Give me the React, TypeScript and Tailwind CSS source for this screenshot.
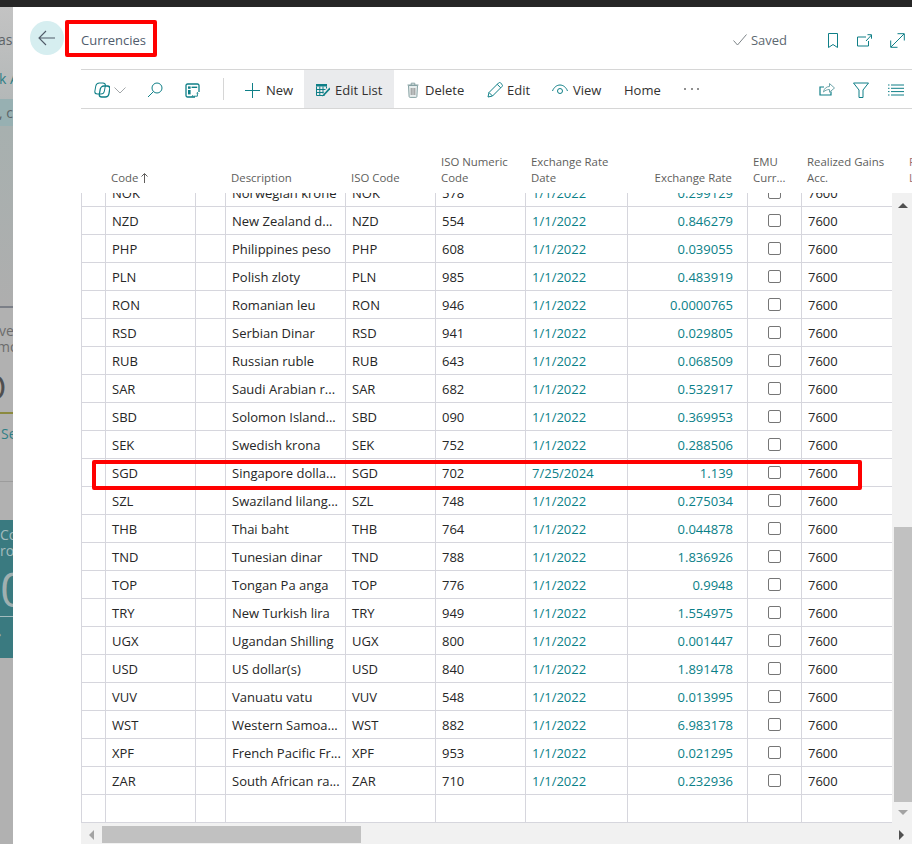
import type { ReactNode } from 'react';

const rows = [
  ['NOK', 'Norwegian krone', '578', '1/1/2022', '0.299129'],
  ['NZD', 'New Zealand d...', '554', '1/1/2022', '0.846279'],
  ['PHP', 'Philippines peso', '608', '1/1/2022', '0.039055'],
  ['PLN', 'Polish zloty', '985', '1/1/2022', '0.483919'],
  ['RON', 'Romanian leu', '946', '1/1/2022', '0.0000765'],
  ['RSD', 'Serbian Dinar', '941', '1/1/2022', '0.029805'],
  ['RUB', 'Russian ruble', '643', '1/1/2022', '0.068509'],
  ['SAR', 'Saudi Arabian r...', '682', '1/1/2022', '0.532917'],
  ['SBD', 'Solomon Island...', '090', '1/1/2022', '0.369953'],
  ['SEK', 'Swedish krona', '752', '1/1/2022', '0.288506'],
  ['SGD', 'Singapore dolla...', '702', '7/25/2024', '1.139'],
  ['SZL', 'Swaziland lilang...', '748', '1/1/2022', '0.275034'],
  ['THB', 'Thai baht', '764', '1/1/2022', '0.044878'],
  ['TND', 'Tunesian dinar', '788', '1/1/2022', '1.836926'],
  ['TOP', 'Tongan Pa anga', '776', '1/1/2022', '0.9948'],
  ['TRY', 'New Turkish lira', '949', '1/1/2022', '1.554975'],
  ['UGX', 'Ugandan Shilling', '800', '1/1/2022', '0.001447'],
  ['USD', 'US dollar(s)', '840', '1/1/2022', '1.891478'],
  ['VUV', 'Vanuatu vatu', '548', '1/1/2022', '0.013995'],
  ['WST', 'Western Samoa...', '882', '1/1/2022', '6.983178'],
  ['XPF', 'French Pacific Fr...', '953', '1/1/2022', '0.021295'],
  ['ZAR', 'South African ra...', '710', '1/1/2022', '0.232936'],
];

function Icon({ w = 16, h = 16, box = '0 0 16 16', children }: { w?: number; h?: number; box?: string; children: ReactNode }) {
  return (
    <svg width={w} height={h} viewBox={box} fill="none" stroke="#0f7f87" strokeWidth="1" className="shrink-0">
      {children}
    </svg>
  );
}

function Cell({ className = '', children }: { className?: string; children?: ReactNode }) {
  return <div className={`h-full border-r border-[#d6d6dd] flex items-center whitespace-nowrap overflow-hidden ${className}`}>{children}</div>;
}

function HeaderCell({ className = '', children }: { className?: string; children?: ReactNode }) {
  return <div className={`whitespace-nowrap leading-[16px] ${className}`}>{children}</div>;
}

function Row({ data }: { data?: string[] }) {
  return (
    <div className="h-[28px] border-l border-b border-[#d6d6dd] grid grid-cols-[24px_90px_30px_120px_90px_90px_102px_120px_54px_90px] items-stretch text-[13px] text-[#262626]">
      <Cell />
      <Cell className="pl-[6px] pt-[2px]">{data?.[0]}</Cell>
      <Cell />
      <Cell className="pl-[6px] pt-[2px]">{data?.[1]}</Cell>
      <Cell className="pl-[6px] pt-[2px]">{data?.[0]}</Cell>
      <Cell className="pl-[6px] pt-[2px]">{data?.[2]}</Cell>
      <Cell className="pl-[6px] pt-[2px] text-[#0a7f88]">{data?.[3]}</Cell>
      <Cell className="justify-end pr-[14px] pt-[2px] text-[#0a7f88]">{data?.[4]}</Cell>
      <Cell className="justify-center">{data && <span className="block w-[13px] h-[13px] border border-[#767676] rounded-[2px] bg-white" />}</Cell>
      <div className="h-full flex items-center pl-[6px] pt-[2px]">{data && '7600'}</div>
    </div>
  );
}

function BackdropStrip() {
  return (
    <div className="w-[13px] shrink-0 overflow-hidden flex flex-col bg-[#b1b1b1] text-[#5d6468] whitespace-nowrap text-[14px]">
      <div className="h-[92px] bg-gradient-to-b from-[#c3c3c3] to-[#b4b8b8] pt-[23px]">
        <div className="-ml-[2px] leading-[20px]">asl</div>
        <div className="mt-[19px] -ml-[1px] leading-[20px] text-[#2f7f86]">k A</div>
      </div>
      <div className="h-[27px] bg-[#97b0b2] flex items-center">
        <span className="-ml-[1px]">, c</span>
      </div>
      <div className="h-[180px] bg-gradient-to-b from-[#a7b0af] to-[#aeaeae]" />
      <div className="h-[2px] bg-[#7b7f87]" />
      <div className="h-[104px] pt-[15px] leading-[16px] text-[#6c6c6c]">
        <div className="-ml-[1px]">ver</div>
        <div className="-ml-[3px]">mo</div>
        <div className="mt-[17px] -ml-[20px] text-[34px] leading-[30px] text-[#4f4f4f]">O</div>
      </div>
      <div className="h-[2px] bg-[#8b8a3f]" />
      <div className="h-[67px] pt-[9px]">
        <span className="ml-[1px] text-[#2f7f86] leading-[16px]">Se</span>
      </div>
      <div className="h-px bg-[#9c9c9c]" />
      <div className="h-[38px]" />
      <div className="h-[138px] bg-[#3a7a80] text-[#a4bcbe] leading-[16px] pt-[7px]">
        <div>Co</div>
        <div>ro</div>
        <div className="mt-[7px] text-[48px] leading-[46px] text-[#a0b0b0]">0</div>
        <div className="h-px bg-[#a4bcbe] mt-[4px]" />
        <div className="-ml-[3px] mt-[9px]">›</div>
      </div>
    </div>
  );
}

function CommandBar() {
  return (
    <div className="h-[40px] border-y border-[#d6d6d6] flex items-center text-[13px] text-[#323130] pl-[13px] pr-[8px] pt-[2px]">
      <Icon>
        <rect x="2.500" y="1" width="9.500" height="11" rx="3" transform="skewX(-10)" />
        <rect x="7.500" y="4" width="9.500" height="11" rx="3" transform="skewX(-10)" strokeWidth="1.300" />
      </Icon>
      <span className="ml-[4px]">
        <Icon w={12} h={12} box="0 0 12 12">
          <path d="M0.5 3.5 6 9l5.5-5.5" stroke="#a2a6a9" />
        </Icon>
      </span>
      <span className="ml-[21px]">
        <Icon>
          <circle cx="10" cy="6" r="5" />
          <path d="M6.5 9.5 1 15" />
        </Icon>
      </span>
      <span className="ml-[22px]">
        <Icon w={15} h={15} box="0 0 15 15">
          <path d="M10 14H2.5A1.5 1.5 0 0 1 1 12.5v-10A1.5 1.5 0 0 1 2.5 1h10A1.5 1.5 0 0 1 14 2.5V9" strokeWidth="1.3" />
          <rect x="3" y="3.4" width="2.6" height="2.4" fill="#0f7f87" stroke="none" />
          <rect x="6.6" y="3.6" width="5.6" height="1.4" fill="#0f7f87" stroke="none" />
          <rect x="3" y="7" width="2.6" height="4.4" fill="#0f7f87" stroke="none" />
          <path d="M12.4 9.6v3.6h-4M7.8 12.3l-.9.9.9.9M11.6 10.3l.8-.8.8.8" strokeWidth="0.9" />
        </Icon>
      </span>
      <div className="ml-[23px] w-px h-[22px] bg-[#d6d6d6] -mt-[2px]" />
      <span className="ml-[21px]">
        <Icon w={15} h={15} box="0 0 15 15">
          <path d="M7.5 0v15M0 7.5h15" />
        </Icon>
      </span>
      <span className="ml-[6px] w-[38px] pt-px">New</span>
      <div className="w-[90px] h-[38px] -mt-[2px] pt-[2px] bg-[#eaebed] flex items-center pl-[12px] gap-[5px]">
        <svg width="14" height="14" viewBox="0 0 14 14" className="shrink-0">
          <path d="M0 1h11v2.5H0z" fill="#0f7f87" />
          <path d="M.5 3.5v9h8M.5 6.5h9M.5 9.5h7M3.8 3.5v9M7 3.5v7M10.5 3.5v2" stroke="#0f7f87" fill="none" />
          <path d="M13.5 4.5 7.5 11l-1.5 2.5 2.6-1.3 6-6.200z" fill="#0f7f87" />
        </svg>
        <span className="pt-px">Edit List</span>
      </div>
      <span className="ml-[13px]">
        <Icon w={12} h={16} box="0 0 12 16">
          <path d="M1.500 3.500h9l-.6 11a1 1 0 0 1-1 .9H3.100a1 1 0 0 1-1-.9z" stroke="#86a1a3" fill="#e8eeee" />
          <path d="M.5 3h11M4.200 3V1.200h3.600V3" stroke="#86a1a3" />
          <path d="M4.200 6v7M6 6v7M7.800 6v7" stroke="#8a8a8a" />
        </Icon>
      </span>
      <span className="ml-[6px] w-[62px] pt-px">Delete</span>
      <Icon>
        <path d="M1 15l1-4.500L11.500 1a1.500 1.500 0 0 1 2.100 0l1.400 1.400a1.500 1.500 0 0 1 0 2.100L5.500 14z" />
        <path d="M2 10.500 5.500 14M10.200 2.300l3.500 3.500" />
      </Icon>
      <span className="ml-[4px] w-[45px] pt-px">Edit</span>
      <Icon h={12} box="0 0 16 12">
        <path d="M.5 7C2 3 5 1 8 1s6 2 7.500 6" />
        <circle cx="8" cy="7" r="2.500" />
      </Icon>
      <span className="ml-[5px] w-[51px] pt-px">View</span>
      <span className="w-[60px] pt-px">Home</span>
      <span className="w-[15px] flex justify-between -mt-[2px]">
        <i className="block w-[2px] h-[2px] bg-[#6b6b6b] rounded-full" />
        <i className="block w-[2px] h-[2px] bg-[#6b6b6b] rounded-full" />
        <i className="block w-[2px] h-[2px] bg-[#6b6b6b] rounded-full" />
      </span>
      <div className="flex-1" />
      <Icon box="0 1.500 16 16">
        <path d="M5 6.500H1v8h11V11" strokeWidth="1.200" />
        <path d="M4.500 11.500C5 8 7.500 6 10.500 6V3l5 4.500-5 4.200V9C8 9 6 10 4.500 11.500z" stroke="#6ea5aa" />
      </Icon>
      <span className="ml-[18px]">
        <Icon>
          <path d="M.5 1h15L10 8v7.500H6V8z" />
        </Icon>
      </span>
      <span className="ml-[19px]">
        <Icon h={12} box="0 0 16 12">
          <path d="M3 1h13M3 4.300h13M3 7.600h13M3 11h13M0 1h1.500M0 4.300h1.500M0 7.600h1.500M0 11h1.500" />
        </Icon>
      </span>
    </div>
  );
}

export default function App() {
  return (
    <div className="relative w-[912px] h-[844px] overflow-hidden flex flex-col bg-white font-['Open_Sans',sans-serif]">
      <div className="h-[7px] bg-[#262626] shrink-0" />
      <div className="flex-1 flex min-h-0">
        <BackdropStrip />
        <div className="flex-1 min-w-0 flex flex-col">
          <div className="h-[62px] shrink-0 flex items-center pl-[17px] pr-[7px] pt-[4px]">
            <div className="w-[34px] h-[34px] -mt-[4px] rounded-full bg-[#d6eef0] flex items-center justify-center">
              <svg width="18" height="16" viewBox="0 0 18 16" fill="none" stroke="#4f5b68" strokeWidth="1.100">
                <path d="M17 8H1M8 1 1 8l7 7" />
              </svg>
            </div>
            <span className="ml-[17px] pt-px text-[13px] text-[#505c6d]">Currencies</span>
            <div className="flex-1" />
            <svg width="14" height="12" viewBox="0 0 14 12" fill="none" stroke="#7d8488">
              <path d="M.5 6.500 4.500 11 13.500 .5" />
            </svg>
            <span className="ml-[4px] pt-px text-[13px] text-[#5d6871]">Saved</span>
            <span className="ml-[41px]">
              <Icon w={10} h={15} box="0 0 10 15">
                <path d="M.5 .5h9v14L5 11.500 .5 14.500z" />
              </Icon>
            </span>
            <span className="ml-[19px]">
              <Icon w={15} h={13} box="0 0 15 13">
                <path d="M9 3H.5v9h11V7" />
                <path d="M9 7 14.500 1M10.500 .7h4v4" />
              </Icon>
            </span>
            <span className="ml-[18px]">
              <Icon w={15} h={15} box="0 0 15 15">
                <path d="M1 14 14 1M7.500 .7h6.800v6.800M.7 7.500v6.800h6.800" />
              </Icon>
            </span>
          </div>
          <div className="ml-[68px] flex-1 min-h-0 flex flex-col">
            <CommandBar />
            <div className="h-[84px] shrink-0 overflow-hidden pb-[7px] flex items-end pl-px">
              <div className="w-[842px] shrink-0 grid grid-cols-[24px_90px_30px_120px_90px_90px_102px_120px_54px_102px_20px] items-end text-[11.400px] text-[#605e5c]">
                <div />
                <HeaderCell className="pl-[5px] flex items-center gap-[3px]">
                  Code
                  <svg width="7" height="10" viewBox="0 0 7 10" fill="none" stroke="#605e5c">
                    <path d="M3.500 10V.8M.5 3.500l3-3 3 3" />
                  </svg>
                </HeaderCell>
                <div />
                <HeaderCell className="pl-[5px]">Description</HeaderCell>
                <HeaderCell className="pl-[5px]">ISO Code</HeaderCell>
                <HeaderCell className="pl-[5px]">ISO Numeric<br />Code</HeaderCell>
                <HeaderCell className="pl-[5px]">Exchange Rate<br />Date</HeaderCell>
                <HeaderCell className="text-right pr-[16px]">Exchange Rate</HeaderCell>
                <HeaderCell className="pl-[5px]">EMU<br />Curr...</HeaderCell>
                <HeaderCell className="pl-[5px]">Realized Gains<br />Acc.</HeaderCell>
                <HeaderCell className="pl-[5px] text-[#9c6f6f]">Realized<br />Losses Acc.</HeaderCell>
              </div>
            </div>
            <div className="flex-1 min-h-0 flex">
              <div className="w-[811px] shrink-0 overflow-hidden">
                <div className="-mt-[14px]">
                  {rows.map((r) => (
                    <Row key={r[0]} data={r} />
                  ))}
                  <Row />
                </div>
              </div>
              <div className="flex-1 flex flex-col bg-[#f1f1f1]">
                <div className="h-[24px] flex items-center justify-center pl-[1px]">
                  <i className="block border-x-[5px] border-x-transparent border-b-[5px] border-b-[#505050]" />
                </div>
                <div className="h-[310px]" />
                <div className="h-[275px] ml-[2px] bg-[#c1c1c1]" />
                <div className="flex-1 flex items-center justify-center pl-[1px]">
                  <i className="block border-x-[5px] border-x-transparent border-t-[5px] border-t-[#a3a3a3]" />
                </div>
              </div>
            </div>
            <div className="h-[21px] shrink-0 bg-[#f1f1f1] flex pt-[3px]">
              <div className="w-[21px] flex items-center justify-center">
                <i className="block border-y-[5px] border-y-transparent border-r-[5px] border-r-[#a3a3a3]" />
              </div>
              <div className="w-[259px] h-[17px] bg-[#c1c1c1]" />
              <div className="flex-1" />
              <div className="w-[21px] flex items-center justify-center">
                <i className="block border-y-[5px] border-y-transparent border-l-[5px] border-l-[#505050]" />
              </div>
            </div>
          </div>
        </div>
      </div>
      <div className="absolute left-[65px] top-[20px] w-[92px] h-[37px] border-[4px] border-[#ff0000] rounded-[2px]" />
      <div className="absolute left-[92px] top-[460px] w-[770px] h-[30px] border-[4px] border-[#ff0000] rounded-[2px]" />
    </div>
  );
}
